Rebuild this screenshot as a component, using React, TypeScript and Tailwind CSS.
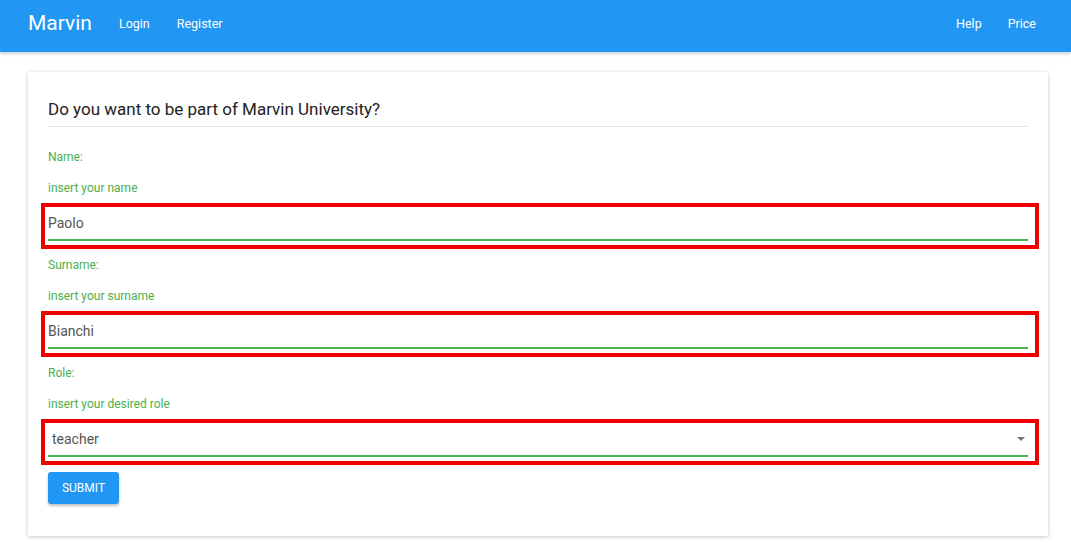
import { useState } from 'react'

const font = { fontFamily: 'Roboto, "Liberation Sans", sans-serif' }

function Field({ label, hint, value }: { label: string; hint: string; value: string }) {
  const [text, setText] = useState(value)
  return (
    <div className="flex flex-col">
      <div className="mt-[7px] text-[12px] leading-[18px] text-[#4caf50]">{label}</div>
      <div className="mt-[13px] text-[12px] leading-[18px] text-[#4caf50]">{hint}</div>
      {/* highlighted field */}
      <div className="mt-[6px] ml-[-7px] mr-[-11px] border-[4px] border-[#ee0000] pl-[3px] pr-[7px]">
        <input
          value={text}
          onChange={e => setText(e.target.value)}
          className="w-full h-[32px] text-[14px] text-[#555] outline-none bg-transparent"
        />
        <div className="h-[2px] bg-[#4caf50] mb-[4px]" />
      </div>
    </div>
  )
}

export default function App() {
  const [role, setRole] = useState('teacher')

  return (
    <div className="min-h-screen bg-white" style={font}>
      {/* Navbar */}
      <nav className="h-[52px] bg-[#2196f3] flex items-center px-[28px] pb-[4px] shadow-[0_2px_3px_rgba(0,0,0,0.18)]">
        <span className="text-[21px] text-white mr-[27px]">Marvin</span>
        <a className="text-[12.5px] text-white mr-[27px]">Login</a>
        <a className="text-[12.5px] text-white">Register</a>
        <div className="ml-auto flex items-center gap-[26px] pr-[7px]">
          <a className="text-[12.5px] text-white">Help</a>
          <a className="text-[12.5px] text-white">Price</a>
        </div>
      </nav>

      {/* Card */}
      <div className="mt-[20px] ml-[28px] w-[1020px] bg-white shadow-[0_1px_4px_rgba(0,0,0,0.22)] px-[20px] pt-[24px] pb-[32px]">
        <h2 className="text-[17px] leading-[26px] text-[#212121] pb-[4px] border-b border-[#e0e0e0]">
          Do you want to be part of Marvin University?
        </h2>
        <div className="h-[14px]" />
        <Field label="Name:" hint="insert your name" value="Paolo" />
        <Field label="Surname:" hint="insert your surname" value="Bianchi" />

        <div className="flex flex-col">
          <div className="mt-[7px] text-[12px] leading-[18px] text-[#4caf50]">Role:</div>
          <div className="mt-[13px] text-[12px] leading-[18px] text-[#4caf50]">insert your desired role</div>
          <div className="mt-[6px] ml-[-7px] mr-[-11px] border-[4px] border-[#ee0000] pl-[3px] pr-[7px]">
            <div className="relative">
              <select
                value={role}
                onChange={e => setRole(e.target.value)}
                className="w-full h-[32px] pl-[4px] text-[14px] text-[#555] outline-none bg-transparent appearance-none"
              >
                <option value="student">student</option>
                <option value="teacher">teacher</option>
              </select>
              <svg className="absolute right-[3px] top-[14px] pointer-events-none" width="8" height="4" viewBox="0 0 8 4">
                <path d="M0 0h8L4 4z" fill="#757575" />
              </svg>
            </div>
            <div className="h-[2px] bg-[#4caf50] mb-[4px]" />
          </div>
        </div>

        <button
          type="submit"
          className="mt-[7px] w-[71px] h-[32px] rounded-[3px] bg-[#2196f3] text-white text-[12px] font-normal uppercase shadow-[0_2px_3px_rgba(0,0,0,0.25)]"
        >
          Submit
        </button>
      </div>
    </div>
  )
}
